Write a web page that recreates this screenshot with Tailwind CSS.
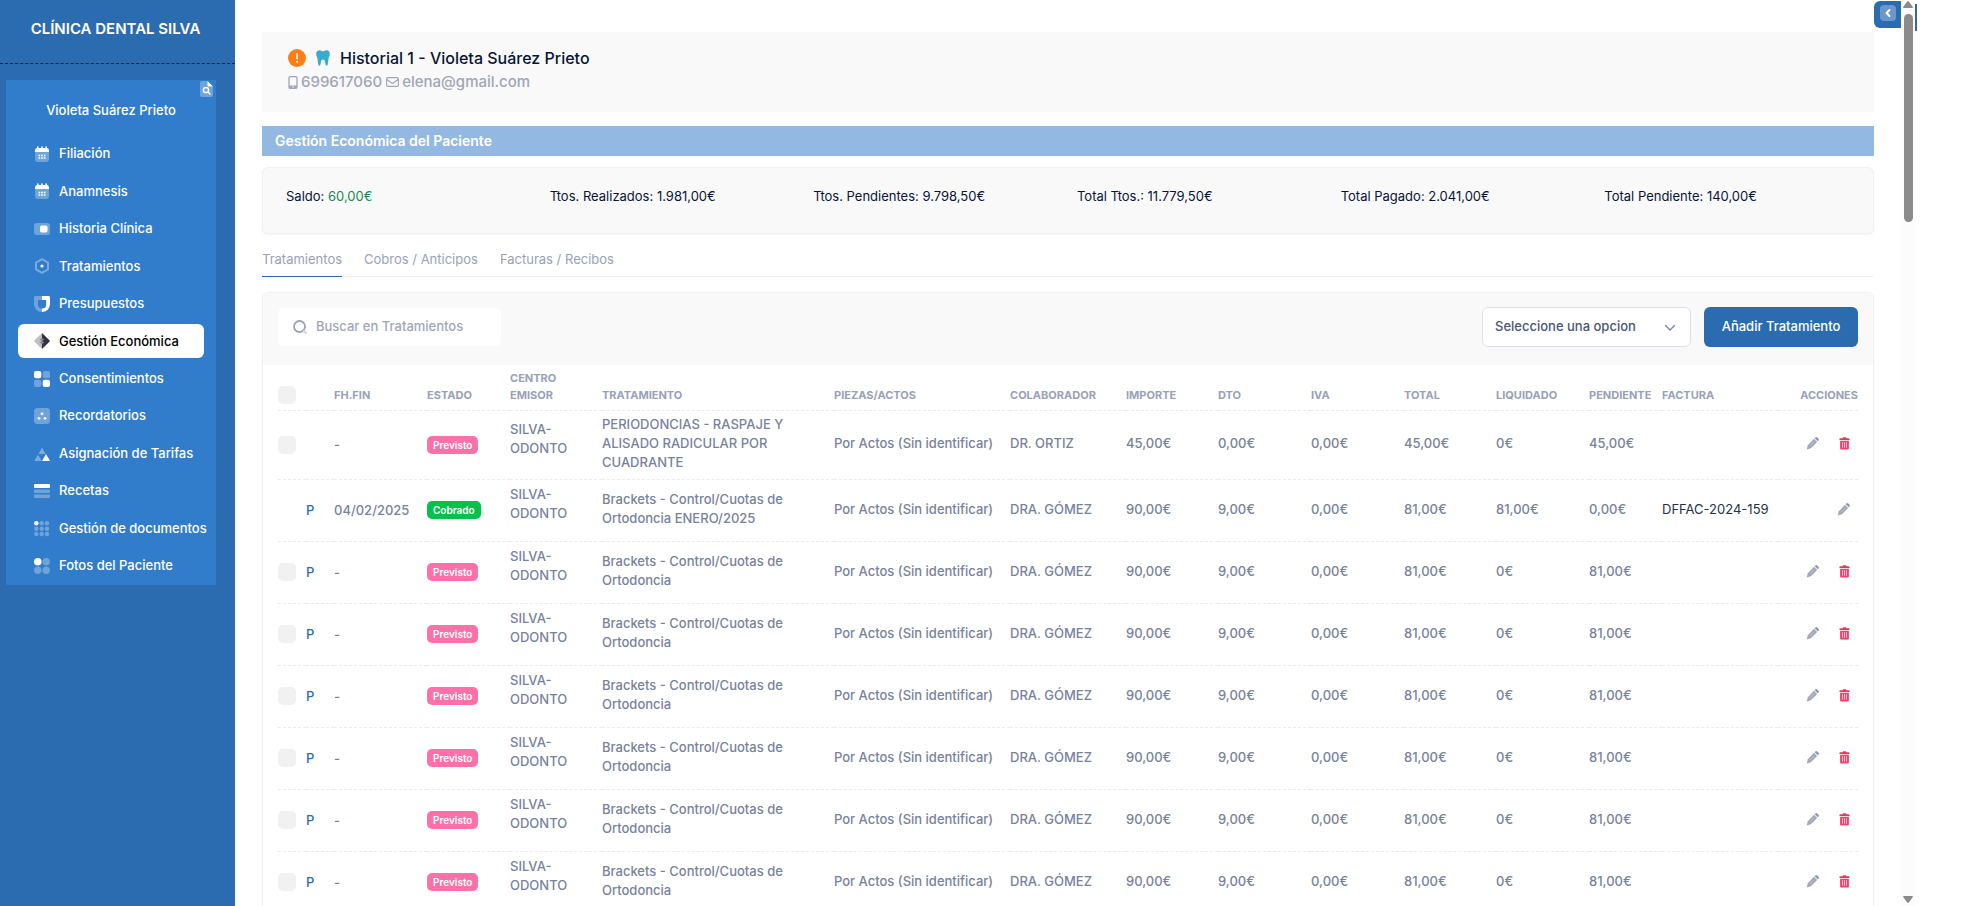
<!DOCTYPE html>
<html lang="es">
<head>
    <meta charset="UTF-8">
    <meta name="viewport" content="width=device-width, initial-scale=1.0">
    <title>Gestión Económica - Clínica Dental Silva</title>
    <script src="https://cdn.jsdelivr.net/npm/@tailwindcss/browser@4"></script>
</head>
<body class="flex h-screen overflow-hidden bg-white pr-[63px] font-['Inter',sans-serif] text-[13px] text-[#071437]">

    <!-- Iconos compartidos por las filas -->
    <svg class="hidden" aria-hidden="true">
        <symbol id="i-pencil" viewBox="0 0 14 14">
            <path d="M8.600 2 12 5.400 5.200 12.200.8 13.500l1.200-4.700z" fill="#a1a6b9"/>
            <path d="m9.300 1.300.7-.7a1.500 1.500 0 0 1 2.200 0l1.200 1.200a1.500 1.500 0 0 1 0 2.200l-.7.7z" fill="#8f97ae"/>
            <path d="m3.800 10.200 5.200-5.200" stroke="#c9cdd9" stroke-width=".8"/>
        </symbol>
        <symbol id="i-trash" viewBox="0 0 12 14">
            <path d="M4 1.200C4 .6 4.400.3 5 .3h2c.6 0 1 .3 1 .9h2.600c.5 0 .9.300.900.800v1.200H.5V2c0-.5.4-.8.900-.8z" fill="#e8365c"/>
            <path d="M1.200 4h9.600v8.200c0 .8-.6 1.400-1.400 1.400H2.600c-.8 0-1.400-.6-1.400-1.400z" fill="#f1416c"/>
            <path d="M3.900 5.500v6M6 5.500v6M8.100 5.500v6" stroke="#ffd3de" stroke-width=".9"/>
        </symbol>
    </svg>

    <!-- Menú lateral -->
    <aside class="w-[235px] shrink-0 bg-[#2b6cb0] text-white">
        <div class="flex h-16 items-center justify-center border-b border-dashed border-[#14253f] pb-1 pr-1">
            <a href="#" class="text-[15px] font-semibold">CLÍNICA DENTAL SILVA</a>
        </div>
        <div class="relative mt-4 ml-1.5 flex w-[210px] flex-col bg-[#317dcc] px-3 pb-0.5 pt-5">
            <button class="absolute right-[3px] top-px" aria-label="Ver ficha">
                <svg class="h-4 w-[13px]" viewBox="0 0 13 16"><path d="M2 0h5l6 6v8a2 2 0 0 1-2 2H2a2 2 0 0 1-2-2V2a2 2 0 0 1 2-2z" fill="#fff" fill-opacity=".3"/><path d="M7.500 0 13 5.500H9a1.500 1.500 0 0 1-1.500-1.500z" fill="#fff"/><circle cx="6" cy="9" r="2.600" fill="none" stroke="#fff" stroke-width="1.500"/><path d="m8 11 2 2" stroke="#fff" stroke-width="1.500" stroke-linecap="round"/></svg>
            </button>
            <p class="text-center font-medium leading-5">Violeta Suárez Prieto</p>
            <nav class="mt-[17px] flex h-[446px] flex-col justify-between whitespace-nowrap font-medium">
                <a href="#" class="flex h-[34px] items-center gap-[9px] rounded-md pl-4">
                    <svg class="size-4 shrink-0" viewBox="0 0 16 16"><path d="M1 6h14v7a3 3 0 0 1-3 3H4a3 3 0 0 1-3-3z" fill="#fff" fill-opacity=".3"/><path d="M1 6V4.500A2.500 2.500 0 0 1 3 2V1a.8.8 0 0 1 1.600 0v1h2.600V1a.8.8 0 0 1 1.600 0v1h2.600V1A.8.8 0 0 1 13 1v1a2.500 2.500 0 0 1 2 2.500V6z" fill="#fff"/><path d="M4.500 9.500h7M4.500 12h7" stroke="#fff" stroke-width="1.500" stroke-dasharray="1.700 .95"/></svg>
                    Filiación
                </a>
                <a href="#" class="flex h-[34px] items-center gap-[9px] rounded-md pl-4">
                    <svg class="size-4 shrink-0" viewBox="0 0 16 16"><path d="M1 6h14v7a3 3 0 0 1-3 3H4a3 3 0 0 1-3-3z" fill="#fff" fill-opacity=".3"/><path d="M1 6V4.500A2.500 2.500 0 0 1 3 2V1a.8.8 0 0 1 1.600 0v1h2.600V1a.8.8 0 0 1 1.600 0v1h2.600V1A.8.8 0 0 1 13 1v1a2.500 2.500 0 0 1 2 2.500V6z" fill="#fff"/><path d="M4.500 9.500h7M4.500 12h7" stroke="#fff" stroke-width="1.500" stroke-dasharray="1.700 .95"/></svg>
                    Anamnesis
                </a>
                <a href="#" class="flex h-[34px] items-center gap-[9px] rounded-md pl-4">
                    <svg class="size-4 shrink-0" viewBox="0 0 16 16"><rect y="2" width="16" height="12" rx="2.500" fill="#fff" fill-opacity=".3"/><rect x="6" y="4.500" width="7.500" height="7" rx="1.800" fill="#fff"/></svg>
                    Historia Clínica
                </a>
                <a href="#" class="flex h-[34px] items-center gap-[9px] rounded-md pl-4">
                    <svg class="size-4 shrink-0" viewBox="0 0 16 16"><path d="m8 1.200 6 3.400v6.800l-6 3.400-6-3.400V4.600z" fill="none" stroke="#fff" stroke-opacity=".35" stroke-width="2" stroke-linejoin="round"/><circle cx="8" cy="8" r="1.600" fill="#fff"/></svg>
                    Tratamientos
                </a>
                <a href="#" class="flex h-[34px] items-center gap-[9px] rounded-md pl-4">
                    <svg class="size-4 shrink-0" viewBox="0 0 16 16"><path d="M8 0H1.500C.6 0 0 .6 0 1.500V8a8 8 0 0 0 8 8v-3.500A4 4 0 0 1 4 9V4h4z" fill="#fff" fill-opacity=".3"/><path d="M8 0h6.500c.9 0 1.500.6 1.500 1.500V8a8 8 0 0 1-8 8v-3.500A4 4 0 0 0 12.200 9V4H8z" fill="#fff"/></svg>
                    Presupuestos
                </a>
                <a href="#" class="flex h-[34px] items-center gap-[9px] rounded-md bg-white pl-4 text-black" aria-current="page">
                    <svg class="size-4 shrink-0" viewBox="0 0 16 16"><path d="M8 0v16L.6 8.700a1 1 0 0 1 0-1.400z" fill="#bdbdc2"/><path d="M8 0v16l7.400-7.300a1 1 0 0 0 0-1.400z" fill="#2f3240"/><path d="M5.500 6.500 8 5.200l2.500 1.300L8 8zM5.500 9.500 8 8l2.500 1.500L8 11z" fill="#8d8583"/></svg>
                    Gestión Económica
                </a>
                <a href="#" class="flex h-[34px] items-center gap-[9px] rounded-md pl-4">
                    <svg class="size-4 shrink-0" viewBox="0 0 16 16" fill="#fff"><rect width="7.300" height="7.300" rx="2"/><rect x="8.700" width="7.300" height="7.300" rx="2" fill-opacity=".3"/><rect y="8.700" width="7.300" height="7.300" rx="2" fill-opacity=".3"/><rect x="8.700" y="8.700" width="7.300" height="7.300" rx="2"/></svg>
                    Consentimientos
                </a>
                <a href="#" class="flex h-[34px] items-center gap-[9px] rounded-md pl-4">
                    <svg class="size-4 shrink-0" viewBox="0 0 16 16" fill="#fff"><rect width="16" height="16" rx="3.500" fill-opacity=".3"/><circle cx="8" cy="5.800" r="1.400"/><circle cx="5" cy="10.300" r="1.400"/><circle cx="11" cy="10.300" r="1.400"/></svg>
                    Recordatorios
                </a>
                <a href="#" class="flex h-[34px] items-center gap-[9px] rounded-md pl-4">
                    <svg class="size-4 shrink-0" viewBox="0 0 16 16" fill="#fff"><path d="M8 1.500 11.500 8h-7zM4 8.700 7.800 15H.2z" fill-opacity=".35"/><path d="M12 8 16 15H8z"/></svg>
                    Asignación de Tarifas
                </a>
                <a href="#" class="flex h-[34px] items-center gap-[9px] rounded-md pl-4">
                    <svg class="size-4 shrink-0" viewBox="0 0 16 16" fill="#fff"><rect y="1" width="16" height="4" rx="1"/><rect y="6.500" width="16" height="3.500" rx="1" fill-opacity=".3"/><rect y="11.500" width="16" height="3.500" rx="1" fill-opacity=".3"/></svg>
                    Recetas
                </a>
                <a href="#" class="flex h-[34px] items-center gap-[9px] rounded-md pl-4">
                    <svg class="size-4 shrink-0" viewBox="0 0 16 16" fill="#fff"><circle cx="2.300" cy="2.300" r="2.200"/><g fill-opacity=".3"><circle cx="7.700" cy="2.300" r="2.200"/><circle cx="13" cy="2.300" r="2.200"/><circle cx="2.300" cy="7.700" r="2.200"/><circle cx="7.700" cy="7.700" r="2.200"/><circle cx="13" cy="7.700" r="2.200"/><circle cx="2.300" cy="13" r="2.200"/><circle cx="7.700" cy="13" r="2.200"/><circle cx="13" cy="13" r="2.200"/></g></svg>
                    Gestión de documentos
                </a>
                <a href="#" class="flex h-[34px] items-center gap-[9px] rounded-md pl-4">
                    <svg class="size-4 shrink-0" viewBox="0 0 16 16" fill="#fff"><circle cx="3.800" cy="3.800" r="3.800"/><g fill-opacity=".3"><circle cx="12.200" cy="3.800" r="3.700"/><circle cx="3.800" cy="12.200" r="3.700"/><circle cx="12.200" cy="12.200" r="3.700"/></g></svg>
                    Fotos del Paciente
                </a>
            </nav>
        </div>
    </aside>

    <main class="relative min-w-0 grow overflow-hidden px-[27px] pt-8">
        <button class="absolute right-0 top-px flex h-[27px] w-[27px] items-start justify-center rounded-l-md bg-[#2b6cb0] pt-1" aria-label="Abrir panel">
            <svg class="size-4" viewBox="0 0 16 16"><rect width="16" height="16" rx="4" fill="#fff" fill-opacity=".3"/><path d="M9.500 5 6.500 8l3 3" fill="none" stroke="#fff" stroke-width="2" stroke-linecap="round" stroke-linejoin="round"/></svg>
        </button>

        <!-- Paciente -->
        <section class="h-20 bg-[#f9f9f9] px-[26px] pt-4">
            <div class="flex items-center">
                <svg class="size-[18px]" viewBox="0 0 18 18"><circle cx="9" cy="9" r="9" fill="#fd7e14"/><path d="M9 4.800v5" stroke="#fff" stroke-width="1.500" stroke-linecap="round"/><circle cx="9" cy="12.800" r="1" fill="#fff"/></svg>
                <svg class="ml-2.5 h-4 w-[14px]" viewBox="0 0 14 16"><path d="M3.500.2C5 .2 6 1.300 7 1.300S9 .2 10.500.2C12.700.2 14 2 13.800 4.200c-.1 1.700-1 2.600-1.300 4.300-.3 2-.3 4.500-1 6.500-.3 1-1.500 1-1.800.1-.6-2-.5-5.600-2.700-5.600S4.900 13.100 4.300 15.100c-.3.900-1.500.9-1.800-.1-.7-2-.7-4.500-1-6.500C1.200 6.800.3 5.900.2 4.200 0 2 1.300.2 3.500.2z" fill="#3aabca"/></svg>
                <h1 class="ml-2.5 text-base font-medium leading-5">Historial 1 - Violeta Suárez Prieto</h1>
            </div>
            <div class="mt-1 flex items-center text-[15px] font-medium leading-5 text-[#a1a5b7]">
                <svg class="h-[13px] w-[10px]" viewBox="0 0 10 13"><rect x="1" y=".7" width="8" height="11.600" rx="1.300" fill="none" stroke="#a1a5b7" stroke-width="1.300"/><path d="M1 9.500h8v2.800H1z" fill="#a1a5b7"/><path d="M4 11h2" stroke="#fff" stroke-width=".8"/></svg>
                <a href="#" class="ml-[3px]">699617060</a>
                <svg class="ml-1 h-[10px] w-[13px]" viewBox="0 0 13 10" fill="none" stroke="#a1a5b7" stroke-width="1.200"><rect x=".6" y=".6" width="11.800" height="8.800" rx="1.200"/><path d="m.8 2.500 5 3.500c.4.300 1 .3 1.400 0l5-3.500"/></svg>
                <a href="#" class="ml-[3px]">elena@gmail.com</a>
            </div>
        </section>

        <h2 class="mt-3.5 bg-[#93b9e3] px-[13px] text-[14px] font-semibold leading-[30px] text-white">Gestión Económica del Paciente</h2>

        <!-- Resumen -->
        <section class="mt-[11px] grid h-[67px] grid-cols-6 rounded-md border border-[#f1f1f2] bg-[#f9f9f9] pl-[23px] pr-[5px] pt-[19px] leading-[18px] shadow-xs">
            <p>Saldo: <span class="text-[#198754]">60,00€</span></p>
            <p>Ttos. Realizados: 1.981,00€</p>
            <p>Ttos. Pendientes: 9.798,50€</p>
            <p>Total Ttos.: 11.779,50€</p>
            <p>Total Pagado: 2.041,00€</p>
            <p>Total Pendiente: 140,00€</p>
        </section>

        <nav class="mt-[15px] flex gap-[22px] border-b border-[#f1f1f4] leading-5 text-[#99a1b7]">
            <a href="#" class="-mb-px border-b border-[#2b6cb0] pb-[7px]">Tratamientos</a>
            <a href="#">Cobros / Anticipos</a>
            <a href="#">Facturas / Recibos</a>
        </nav>

        <!-- Tratamientos -->
        <section class="mt-[15px] overflow-hidden rounded-md border border-[#f1f1f2] shadow-xs">
            <div class="flex h-[72px] items-start justify-between bg-[#f9f9f9] px-[15px] pt-3.5">
                <label class="mt-px flex h-[38px] w-[223px] items-center rounded-md bg-white pl-[15px]">
                    <svg class="size-3.5" viewBox="0 0 14 14"><circle cx="6.500" cy="6.500" r="5.500" fill="none" stroke="#99a1b7" stroke-width="1.800"/><path d="m11 11 2 2" stroke="#d5d8e2" stroke-width="2" stroke-linecap="round"/></svg>
                    <input type="text" placeholder="Buscar en Tratamientos" aria-label="Buscar en Tratamientos" class="ml-[9px] w-[170px] font-medium outline-none placeholder:text-[#a1a5b7]">
                </label>
                <div class="flex gap-[13px]">
                    <div class="relative">
                        <select aria-label="Opciones" class="h-10 w-[209px] appearance-none rounded-md border border-[#dbdfe9] bg-white px-3 font-medium text-[#4b5675]">
                            <option>Seleccione una opcion</option>
                        </select>
                        <svg class="pointer-events-none absolute right-[15px] top-[15px] h-3 w-3" viewBox="0 0 12 12"><path d="m1.500 3.500 4.500 4.500 4.500-4.500" fill="none" stroke="#78829d" stroke-width="1.400" stroke-linecap="round" stroke-linejoin="round"/></svg>
                    </div>
                    <button class="h-10 w-[154px] rounded-md bg-[#2b6cb0] font-medium text-white">Añadir Tratamiento</button>
                </div>
            </div>
            <div class="px-[15px]">
                <table class="w-full table-fixed text-left">
                    <thead>
                        <tr class="h-[45px] border-b border-dashed border-[#ebebef] align-bottom text-[11px] font-semibold leading-[17px] text-[#99a1b7] [&>th]:pb-1.5">
                            <th class="w-7"><input type="checkbox" aria-label="Seleccionar todo" class="block size-[18px] appearance-none rounded-[5px] bg-[#f1f1f2]"></th>
                            <th class="w-7"></th>
                            <th class="w-[93px]">FH.FIN</th>
                            <th class="w-[83px]">ESTADO</th>
                            <th class="w-[92px] pr-4">CENTRO EMISOR</th>
                            <th class="w-[232px]">TRATAMIENTO</th>
                            <th class="w-[176px]">PIEZAS/ACTOS</th>
                            <th class="w-[116px]">COLABORADOR</th>
                            <th class="w-[92px]">IMPORTE</th>
                            <th class="w-[93px]">DTO</th>
                            <th class="w-[93px]">IVA</th>
                            <th class="w-[92px]">TOTAL</th>
                            <th class="w-[93px]">LIQUIDADO</th>
                            <th class="w-[73px]">PENDIENTE</th>
                            <th>FACTURA</th>
                            <th class="w-[80px] text-right">ACCIONES</th>
                        </tr>
                    </thead>
                    <tbody id="filas" class="font-medium leading-[19px] text-[#78829d]"></tbody>
                </table>
            </div>
        </section>
    </main>

    <!-- Barra de desplazamiento -->
    <div class="flex w-3.5 shrink-0 flex-col items-center justify-between bg-[#fcfcfc] pb-[3px] pt-px" aria-hidden="true">
        <div class="flex flex-col items-center gap-1.5">
            <svg class="h-[7px] w-[10px]" viewBox="0 0 10 7"><path d="M4 .8a1.200 1.200 0 0 1 2 0L9.800 6c.3.500 0 1-.6 1H.8C.2 7-.1 6.500.2 6z" fill="#8b8b8b"/></svg>
            <div class="h-[208px] w-[9px] rounded-full bg-[#8b8b8b]"></div>
        </div>
        <svg class="h-[7px] w-[10px]" viewBox="0 0 10 7"><path d="M4 6.200a1.200 1.200 0 0 0 2 0L9.800 1c.3-.5 0-1-.6-1H.8C.2 0-.1.500.2 1z" fill="#8b8b8b"/></svg>
    </div>
    <div class="mt-1 h-[27px] w-0.5 shrink-0 bg-[#3a6896]"></div>

    <script>
        const brackets = 'Brackets - Control/Cuotas de Ortodoncia';
        const prevista = { p: true, fecha: '-', estado: 'Previsto', tto: brackets, colab: 'DRA. GÓMEZ', importe: '90,00€', dto: '9,00€', total: '81,00€', liq: '0€', pend: '81,00€', factura: '' };

        const filas = [
            { p: false, fecha: '-', estado: 'Previsto', tto: 'PERIODONCIAS - RASPAJE Y ALISADO RADICULAR POR CUADRANTE', colab: 'DR. ORTIZ', importe: '45,00€', dto: '0,00€', total: '45,00€', liq: '0€', pend: '45,00€', factura: '' },
            { p: true, fecha: '04/02/2025', estado: 'Cobrado', tto: brackets + ' ENERO/2025', colab: 'DRA. GÓMEZ', importe: '90,00€', dto: '9,00€', total: '81,00€', liq: '81,00€', pend: '0,00€', factura: 'DFFAC-2024-159' },
            prevista, prevista, prevista, prevista, prevista, prevista
        ];

        document.getElementById('filas').innerHTML = filas.map((f, i) => {
            const cobrado = f.estado === 'Cobrado';
            return `
            <tr class="${i === 0 ? 'h-[69px]' : 'h-[62px]'} border-b border-dashed border-[#ebebef]">
                <td>${cobrado ? '' : `<input type="checkbox" aria-label="Seleccionar fila ${i + 1}" class="block size-[18px] appearance-none rounded-[5px] bg-[#f1f1f2]">`}</td>
                <td class="text-[#2b6cb0]">${f.p ? 'P' : ''}</td>
                <td>${f.fecha}</td>
                <td><span class="block w-fit rounded-[5px] px-1.5 text-[10px] font-semibold leading-[18px] text-white ${cobrado ? 'bg-[#04c14b]' : 'bg-[#ff6fa8]'}">${f.estado}</span></td>
                <td class="pb-3 pr-2">SILVA-ODONTO</td>
                <td class="pb-0.5 pr-10">${f.tto}</td>
                <td class="pb-0.5">Por Actos (Sin identificar)</td>
                <td class="pb-0.5">${f.colab}</td>
                <td class="pb-0.5">${f.importe}</td>
                <td class="pb-0.5">${f.dto}</td>
                <td class="pb-0.5">0,00€</td>
                <td class="pb-0.5">${f.total}</td>
                <td class="pb-0.5">${f.liq}</td>
                <td class="pb-0.5">${f.pend}</td>
                <td class="pb-0.5 font-normal text-[#252f4a]">${f.factura}</td>
                <td class="pb-0.5">
                    <div class="flex justify-end gap-5 pr-2">
                        <button aria-label="Editar"><svg class="size-[13px]"><use href="#i-pencil"/></svg></button>
                        ${cobrado ? '' : '<button aria-label="Eliminar"><svg class="h-[13px] w-[11px]"><use href="#i-trash"/></svg></button>'}
                    </div>
                </td>
            </tr>`;
        }).join('');
    </script>
</body>
</html>
